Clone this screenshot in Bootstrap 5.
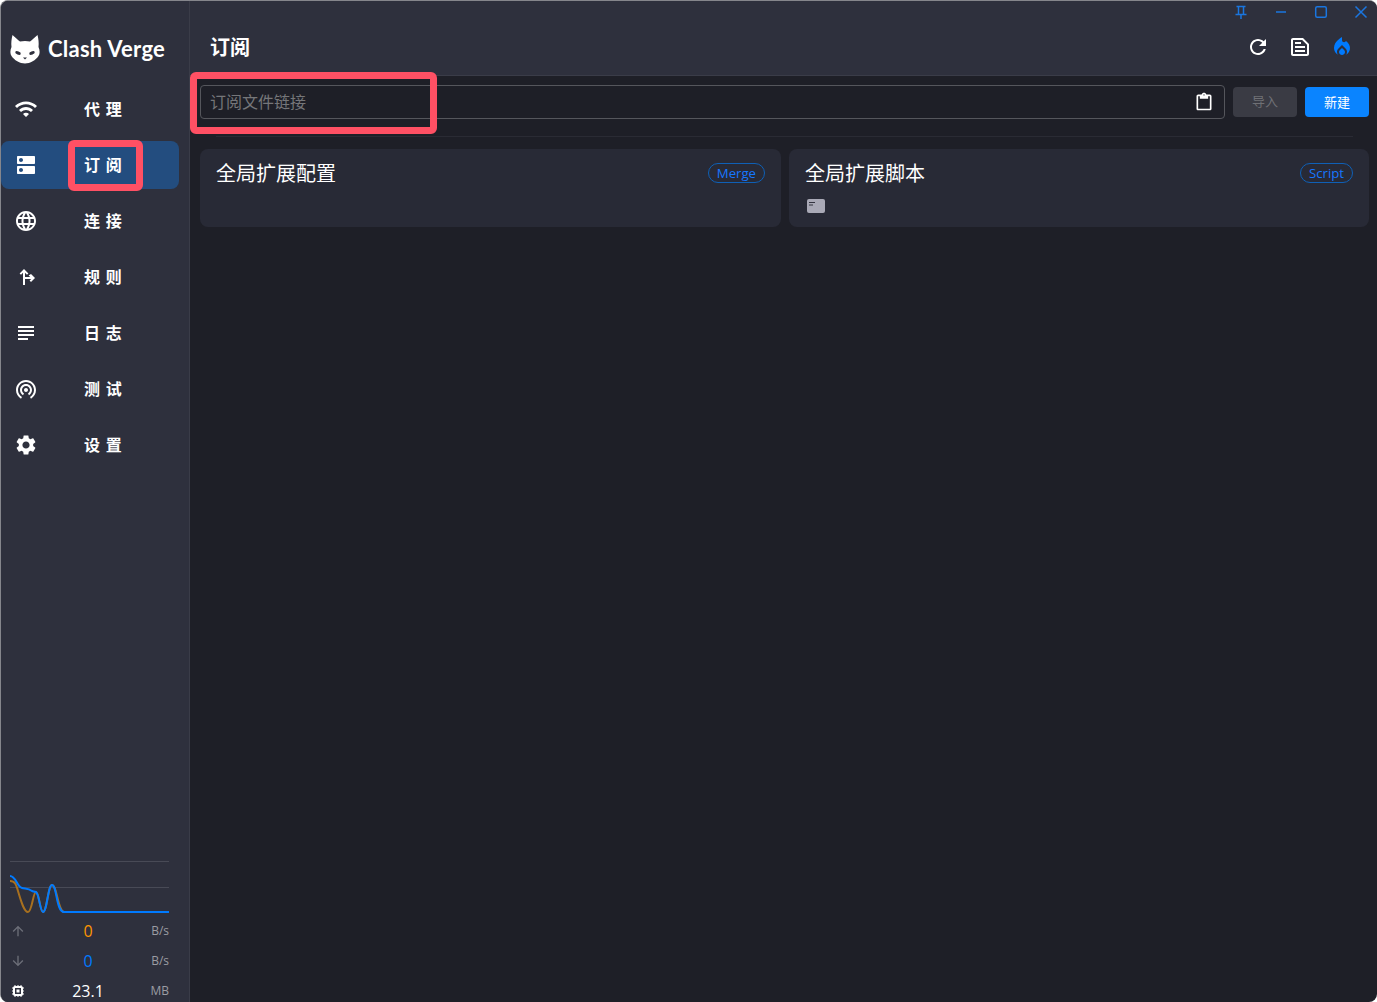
<!DOCTYPE html>
<html lang="zh-CN">
<head>
<meta charset="utf-8">
<title>Clash Verge</title>
<link href="https://cdn.jsdelivr.net/npm/bootstrap@5.3.0/dist/css/bootstrap.min.css" rel="stylesheet">
<style>
html,body{height:100%;margin:0;background:#fff;overflow:hidden}
body{font-family:"Open Sans","Noto Sans CJK SC","Liberation Sans",sans-serif}
.app-shell{height:1002px;width:1377px;background:#1e1f27;border-radius:8px;overflow:hidden;border-top:1px solid #85868c;border-left:1px solid #85868c;color:#fff}
.side-pane{width:189px;flex:none;background:#2e303d;border-right:1px solid #3a3c48}
.brand-row{height:48px;margin-top:24px;padding-left:9px;gap:8px;margin-bottom:12px}
.brand-name{font:700 22px "Lato","Noto Sans",sans-serif;letter-spacing:.25px;margin-top:-1px}
.menu-link{width:178px;height:48px;margin-bottom:8px;border-radius:8px;color:#fff;padding:0 0 0 13px;display:flex;align-items:center}
.menu-link:hover{color:#fff}
.menu-link.is-on{background:#234d7f}
.menu-ico{width:24px;height:24px;fill:#fff;flex:none}
.menu-text{margin-left:46px;margin-top:-2px;font:700 16px "Noto Sans CJK SC",sans-serif;letter-spacing:.5px;word-spacing:1px;white-space:pre}
.traffic{padding:0 20px 0 9px;margin-bottom:-4px}
.graph{display:block;width:159px;height:54px;margin-bottom:1px}
.stat-row{height:30px;display:flex;align-items:center}
.stat-ico{width:16px;height:16px;flex:none;fill:#6c6e78}
.stat-num{flex:1;text-align:center;font-size:16px;margin-left:-1px;padding-left:12px}
.stat-unit{font-size:12px;color:#9b9ca3;width:30px;text-align:right}
.num-up{color:#ff9500}.num-down{color:#007aff}
.main-pane{min-width:0;position:relative}
.top-bar{height:75px;background:#2e303d;border-bottom:1px solid #3a3c48;position:relative;flex:none}
.win-btns{position:absolute;top:0;right:-4px;display:flex}
.win-btn{width:40px;height:22px;display:flex;align-items:center;justify-content:center}
.win-btn svg{width:16px;height:16px;fill:none;stroke:#1a76e0;stroke-width:1.5}
.page-title{font:700 20px "Noto Sans CJK SC",sans-serif;margin:0;padding-left:20px;padding-top:32px;line-height:28px}
.top-actions{position:absolute;top:34px;right:23px;display:flex;gap:18px}
.top-actions svg{width:24px;height:24px;fill:#fff;display:block}
.top-actions svg.hot{fill:#007aff}
.url-row{padding:9px 8px 0 10px;gap:8px;height:46px}
.url-box{flex:1;height:34px;border:1px solid #55565c;border-radius:4px;background:#1e1f27;display:flex;align-items:center;padding:0 10px 0 9px}
.url-ph{flex:1;color:#757679;font:400 16px "Noto Sans CJK SC",sans-serif;margin-top:-2px}
.url-box svg{width:20px;height:20px}
.act-btn{width:64px;height:30px;margin-top:2px;border:0;border-radius:4px;padding:0 0 2px;font:400 13px "Noto Sans CJK SC",sans-serif}
.act-btn.act-off,.act-btn.act-off:disabled{background:#3a3b44;color:#6f7075;opacity:1;padding-bottom:4px}
.act-btn.act-on,.act-btn.act-on:hover{background:#0a84ff;color:#fff}
.rule-line{margin:14px 24px 0 26px;height:1px;background:#2a2b34}
.card-grid{display:grid;grid-template-columns:581px 580px;gap:8px;padding:12px 8px 0 10px}
.ext-card{height:78px;background:#282a36;border-radius:8px;padding:11px 16px;position:relative}
.ext-title{font:400 20px/26px "Noto Sans CJK SC",sans-serif;margin:0}
.ext-chip{position:absolute;right:16px;top:14px;height:20px;padding:0 8px;border:1px solid #0f60b6;border-radius:10px;color:#1677ff;font:400 13.2px/18px "Open Sans",sans-serif}
.ext-ico{display:block;margin:13px 0 0 2px;width:18px;height:14px}
.callout{position:absolute;border:7px solid #ff5064;border-radius:6px;pointer-events:none}
.callout-url{left:189px;top:71px;width:247px;height:62px}
.callout-nav{left:67px;top:139px;width:75px;height:51px}
</style>
</head>
<body>
<div class="app-shell d-flex position-relative">
  <aside class="side-pane d-flex flex-column">
    <div class="brand-row d-flex align-items-center">
      <svg width="30" height="30" viewBox="0 0 30 30"><path d="M2.500 1C5 3 8 6 10 7.500 13 6.800 17 6.800 20 7.500 22 6 25 3 27.500 1 28.500 5 29 9 28.500 13 30 16 30 20 28.500 22 26 26 20 29.500 15 29.500 10 29.500 4 26 1.500 22 0 20 0 16 1.500 13 1 9 1.500 5 2.500 1z" fill="#fff"/><ellipse cx="8" cy="19" rx="2.900" ry="1.600" transform="rotate(20 8 19)" fill="#2e303d"/><ellipse cx="22" cy="19" rx="2.900" ry="1.600" transform="rotate(-20 22 19)" fill="#2e303d"/><path d="M13 23.500h4l-2 2z" fill="#2e303d"/></svg>
      <span class="brand-name">Clash Verge</span>
    </div>
    <nav class="nav flex-column">
      <a class="nav-link menu-link" href="#"><svg class="menu-ico" viewBox="0 0 24 24"><path d="M1 9l2 2c4.970-4.970 13.030-4.970 18 0l2-2C16.930 2.930 7.080 2.930 1 9zm8 8l3 3 3-3c-1.650-1.660-4.340-1.660-6 0zm-4-4l2 2c2.760-2.760 7.240-2.760 10 0l2-2C15.140 9.140 8.870 9.140 5 13z"/></svg><span class="menu-text">代 理</span></a>
      <a class="nav-link menu-link is-on" href="#"><svg class="menu-ico" viewBox="0 0 24 24"><path d="M20 13H4c-.55 0-1 .45-1 1v6c0 .55.45 1 1 1h16c.55 0 1-.45 1-1v-6c0-.55-.45-1-1-1zM7 19c-1.100 0-2-.9-2-2s.9-2 2-2 2 .9 2 2-.9 2-2 2zM20 3H4c-.55 0-1 .45-1 1v6c0 .55.45 1 1 1h16c.55 0 1-.45 1-1V4c0-.55-.45-1-1-1zM7 9c-1.100 0-2-.9-2-2s.9-2 2-2 2 .9 2 2-.9 2-2 2z"/></svg><span class="menu-text">订 阅</span></a>
      <a class="nav-link menu-link" href="#"><svg class="menu-ico" viewBox="0 0 24 24"><path d="M11.990 2C6.470 2 2 6.480 2 12s4.470 10 9.990 10C17.520 22 22 17.520 22 12S17.520 2 11.990 2zm6.930 6h-2.950c-.32-1.250-.78-2.450-1.380-3.560 1.840.63 3.370 1.910 4.330 3.560zM12 4.040c.83 1.200 1.480 2.530 1.910 3.960h-3.820c.43-1.430 1.080-2.760 1.910-3.960zM4.260 14C4.100 13.360 4 12.690 4 12s.1-1.360.26-2h3.380c-.08.66-.14 1.320-.14 2 0 .68.06 1.340.14 2H4.260zm.82 2h2.950c.32 1.250.78 2.450 1.380 3.560-1.840-.63-3.370-1.900-4.330-3.560zm2.950-8H5.080c.96-1.660 2.490-2.930 4.330-3.560C8.810 5.550 8.350 6.750 8.030 8zM12 19.960c-.83-1.200-1.480-2.530-1.910-3.960h3.820c-.43 1.430-1.080 2.760-1.910 3.960zM14.340 14H9.660c-.09-.66-.16-1.320-.16-2 0-.68.07-1.350.16-2h4.680c.09.65.16 1.320.16 2 0 .68-.07 1.340-.16 2zm.25 5.560c.6-1.110 1.060-2.310 1.380-3.560h2.950c-.96 1.650-2.490 2.930-4.330 3.560zM16.360 14c.08-.66.14-1.320.14-2 0-.68-.06-1.340-.14-2h3.380c.16.64.26 1.310.26 2s-.1 1.360-.26 2h-3.380z"/></svg><span class="menu-text">连 接</span></a>
      <a class="nav-link menu-link" href="#"><svg class="menu-ico" viewBox="0 0 24 24"><path d="M9 20V7.800L7 9.800 5.600 8.400 10 4l4.400 4.400L13 9.800l-2-2V12h5.200l-1.600-1.600L17 9l4 4-4 4-1.400-1.400 1.600-1.600H11v6z"/></svg><span class="menu-text">规 则</span></a>
      <a class="nav-link menu-link" href="#"><svg class="menu-ico" viewBox="0 0 24 24"><path d="M14 17H4v2h10v-2zm6-8H4v2h16V9zM4 15h16v-2H4v2zM4 5v2h16V5H4z"/></svg><span class="menu-text">日 志</span></a>
      <a class="nav-link menu-link" href="#"><svg class="menu-ico" viewBox="0 0 24 24"><path d="M12 11c-1.100 0-2 .9-2 2 0 1.100.9 2 2 2s2-.9 2-2c0-1.100-.9-2-2-2zm6 2c0-3.310-2.690-6-6-6s-6 2.690-6 6c0 2.220 1.210 4.150 3 5.190l1-1.740c-1.190-.7-2-1.970-2-3.450 0-2.210 1.790-4 4-4s4 1.790 4 4c0 1.480-.81 2.750-2 3.450l1 1.740c1.790-1.040 3-2.970 3-5.190zM12 3C6.480 3 2 7.480 2 13c0 3.700 2.010 6.920 4.990 8.650l1-1.730C5.610 18.530 4 15.960 4 13c0-4.420 3.580-8 8-8s8 3.580 8 8c0 2.960-1.610 5.530-4 6.920l1 1.730c2.990-1.730 5-4.950 5-8.650 0-5.520-4.480-10-10-10z"/></svg><span class="menu-text">测 试</span></a>
      <a class="nav-link menu-link" href="#"><svg class="menu-ico" viewBox="0 0 24 24"><path d="M19.140 12.940c.04-.3.06-.61.06-.94 0-.32-.02-.64-.07-.94l2.030-1.580c.18-.14.23-.41.12-.61l-1.920-3.320c-.12-.22-.37-.29-.59-.22l-2.390.96c-.5-.38-1.030-.7-1.620-.94l-.36-2.540c-.04-.24-.24-.41-.48-.41h-3.840c-.24 0-.43.17-.47.41l-.36 2.540c-.59.24-1.130.57-1.620.94l-2.390-.96c-.22-.08-.47 0-.59.22L2.740 8.870c-.12.21-.08.47.12.61l2.030 1.580c-.05.3-.09.63-.09.94s.02.64.07.94l-2.030 1.580c-.18.14-.23.41-.12.61l1.920 3.320c.12.22.37.29.59.22l2.390-.96c.5.38 1.030.7 1.620.94l.36 2.54c.05.24.24.41.48.41h3.840c.24 0 .44-.17.47-.41l.36-2.540c.59-.24 1.130-.56 1.620-.94l2.390.96c.22.08.47 0 .59-.22l1.920-3.320c.12-.22.07-.47-.12-.61l-2.010-1.580zM12 15.600c-1.980 0-3.600-1.620-3.600-3.600s1.620-3.600 3.600-3.600 3.600 1.620 3.600 3.600-1.620 3.600-3.600 3.600z"/></svg><span class="menu-text">设 置</span></a>
    </nav>
    <div class="traffic mt-auto">
      <svg class="graph" viewBox="0 0 159 54" fill="none">
        <path d="M0 .5H159M0 26.500H159" stroke="#484a56"/>
        <path d="M0 20C5 20 6 23 8 30 11 40 14 51 18 51 22 51 23 31 26 31 29 31 30 51 33 51 37 51 38 24 42 24 47 24 48 51 54 51H159" stroke="#a8701f" stroke-width="2"/>
        <path d="M0 15C6 15 7 26 12 27 15 28 18 27 22 30 26 32 26 29 28 35 30 42 31 51 33 51 37 51 38 24 42 24 47 24 46 51 54 51H159" stroke="#007aff" stroke-width="2"/>
      </svg>
      <div class="stat-row"><svg class="stat-ico" viewBox="0 0 24 24"><path d="M4 12l1.410 1.410L11 7.830V20h2V7.830l5.580 5.590L20 12l-8-8-8 8z"/></svg><span class="stat-num num-up">0</span><span class="stat-unit">B/s</span></div>
      <div class="stat-row"><svg class="stat-ico" viewBox="0 0 24 24"><path d="M20 12l-1.410-1.410L13 16.170V4h-2v12.170l-5.580-5.590L4 12l8 8 8-8z"/></svg><span class="stat-num num-down">0</span><span class="stat-unit">B/s</span></div>
      <div class="stat-row"><svg class="stat-ico" viewBox="0 0 16 16" fill="none"><path d="M5 2v2M8 2v2M11 2v2M5 12v2M8 12v2M11 12v2M2 5h2M2 8h2M2 11h2M12 5h2M12 8h2M12 11h2" stroke="#fff"/><rect x="3" y="3" width="10" height="10" rx="2" fill="#fff"/><rect x="5" y="5" width="6" height="6" fill="#2e303d"/><rect x="6.500" y="6.500" width="3" height="3" fill="#fff"/></svg><span class="stat-num">23.1</span><span class="stat-unit">MB</span></div>
    </div>
  </aside>
  <main class="main-pane flex-grow-1 d-flex flex-column">
    <header class="top-bar">
      <div class="win-btns">
        <div class="win-btn"><svg viewBox="0 0 16 16"><path d="M3.500 2.500h9M5.500 2.500v7.500M10.500 2.500v7.500M2.500 10.500h11M8 10.500V15"/></svg></div>
        <div class="win-btn"><svg viewBox="0 0 16 16"><path d="M3 8h10"/></svg></div>
        <div class="win-btn"><svg viewBox="0 0 16 16"><rect x="2.700" y="2.700" width="10.600" height="10.600" rx="1.500"/></svg></div>
        <div class="win-btn"><svg viewBox="0 0 16 16"><path d="M2.500 2.500l11 11M13.500 2.500l-11 11"/></svg></div>
      </div>
      <h1 class="page-title">订阅</h1>
      <div class="top-actions">
        <svg viewBox="0 0 24 24"><path d="M17.650 6.350C16.200 4.900 14.210 4 12 4c-4.420 0-7.990 3.580-7.990 8s3.570 8 7.990 8c3.730 0 6.840-2.550 7.730-6h-2.080c-.82 2.330-3.040 4-5.650 4-3.310 0-6-2.690-6-6s2.690-6 6-6c1.660 0 3.140.69 4.220 1.780L13 11h7V4l-2.350 2.350z"/></svg>
        <svg viewBox="0 0 24 24"><path d="M15 3H5c-1.100 0-2 .9-2 2v14c0 1.100.9 2 2 2h14c1.100 0 2-.9 2-2V9l-6-6zM5 19V5h9.170L19 9.830V19H5zm2-2h10v-2H7v2zm0-4h10v-2H7v2zm0-4h6V7H7v2z"/></svg>
        <svg class="hot" viewBox="0 0 24 24"><path d="M12 12.900l-2.130 2.090c-.56.56-.87 1.290-.87 2.070C9 18.680 10.350 20 12 20s3-1.320 3-2.940c0-.78-.31-1.520-.87-2.070L12 12.900z"/><path d="M16 6l-.44.55C14.380 8.020 12 7.190 12 5.300V2S4 6 4 13c0 2.920 1.560 5.470 3.890 6.860-.56-.79-.89-1.760-.89-2.800 0-1.320.52-2.560 1.470-3.500L12 10.100l3.530 3.470c.95.93 1.470 2.170 1.470 3.500 0 1.020-.31 1.960-.85 2.750 1.890-1.150 3.290-3.060 3.710-5.300.66-3.500-1.080-6.160-3.860-8.520z"/></svg>
      </div>
    </header>
    <div class="url-row d-flex">
      <div class="url-box">
        <span class="url-ph">订阅文件链接</span>
        <svg viewBox="0 0 24 24" fill="#fff"><path d="M19 3h-4.180C14.400 1.840 13.300 1 12 1s-2.400.84-2.820 2H5c-1.100 0-2 .9-2 2v15c0 1.100.9 2 2 2h14c1.100 0 2-.9 2-2V5c0-1.100-.9-2-2-2zm-7-.25c.41 0 .75.34.75.75s-.34.75-.75.75-.75-.34-.75-.75.34-.75.75-.75zM19 20H5V5h2v3h10V5h2v15z"/></svg>
      </div>
      <button class="btn act-btn act-off" type="button" disabled>导入</button>
      <button class="btn act-btn act-on" type="button">新建</button>
    </div>
    <div class="rule-line"></div>
    <section class="card-grid">
      <article class="ext-card"><h2 class="ext-title">全局扩展配置</h2><span class="ext-chip">Merge</span></article>
      <article class="ext-card"><h2 class="ext-title">全局扩展脚本</h2><span class="ext-chip">Script</span>
        <svg class="ext-ico" viewBox="0 0 18 14"><rect width="18" height="14" rx="2" fill="#a9a9b6"/><path d="M2 3.500h6M2 6h4" stroke="#33343f"/></svg>
      </article>
    </section>
  </main>
  <div class="callout callout-url"></div>
  <div class="callout callout-nav"></div>
</div>
<script src="https://cdn.jsdelivr.net/npm/bootstrap@5.3.0/dist/js/bootstrap.bundle.min.js"></script>
</body>
</html>
